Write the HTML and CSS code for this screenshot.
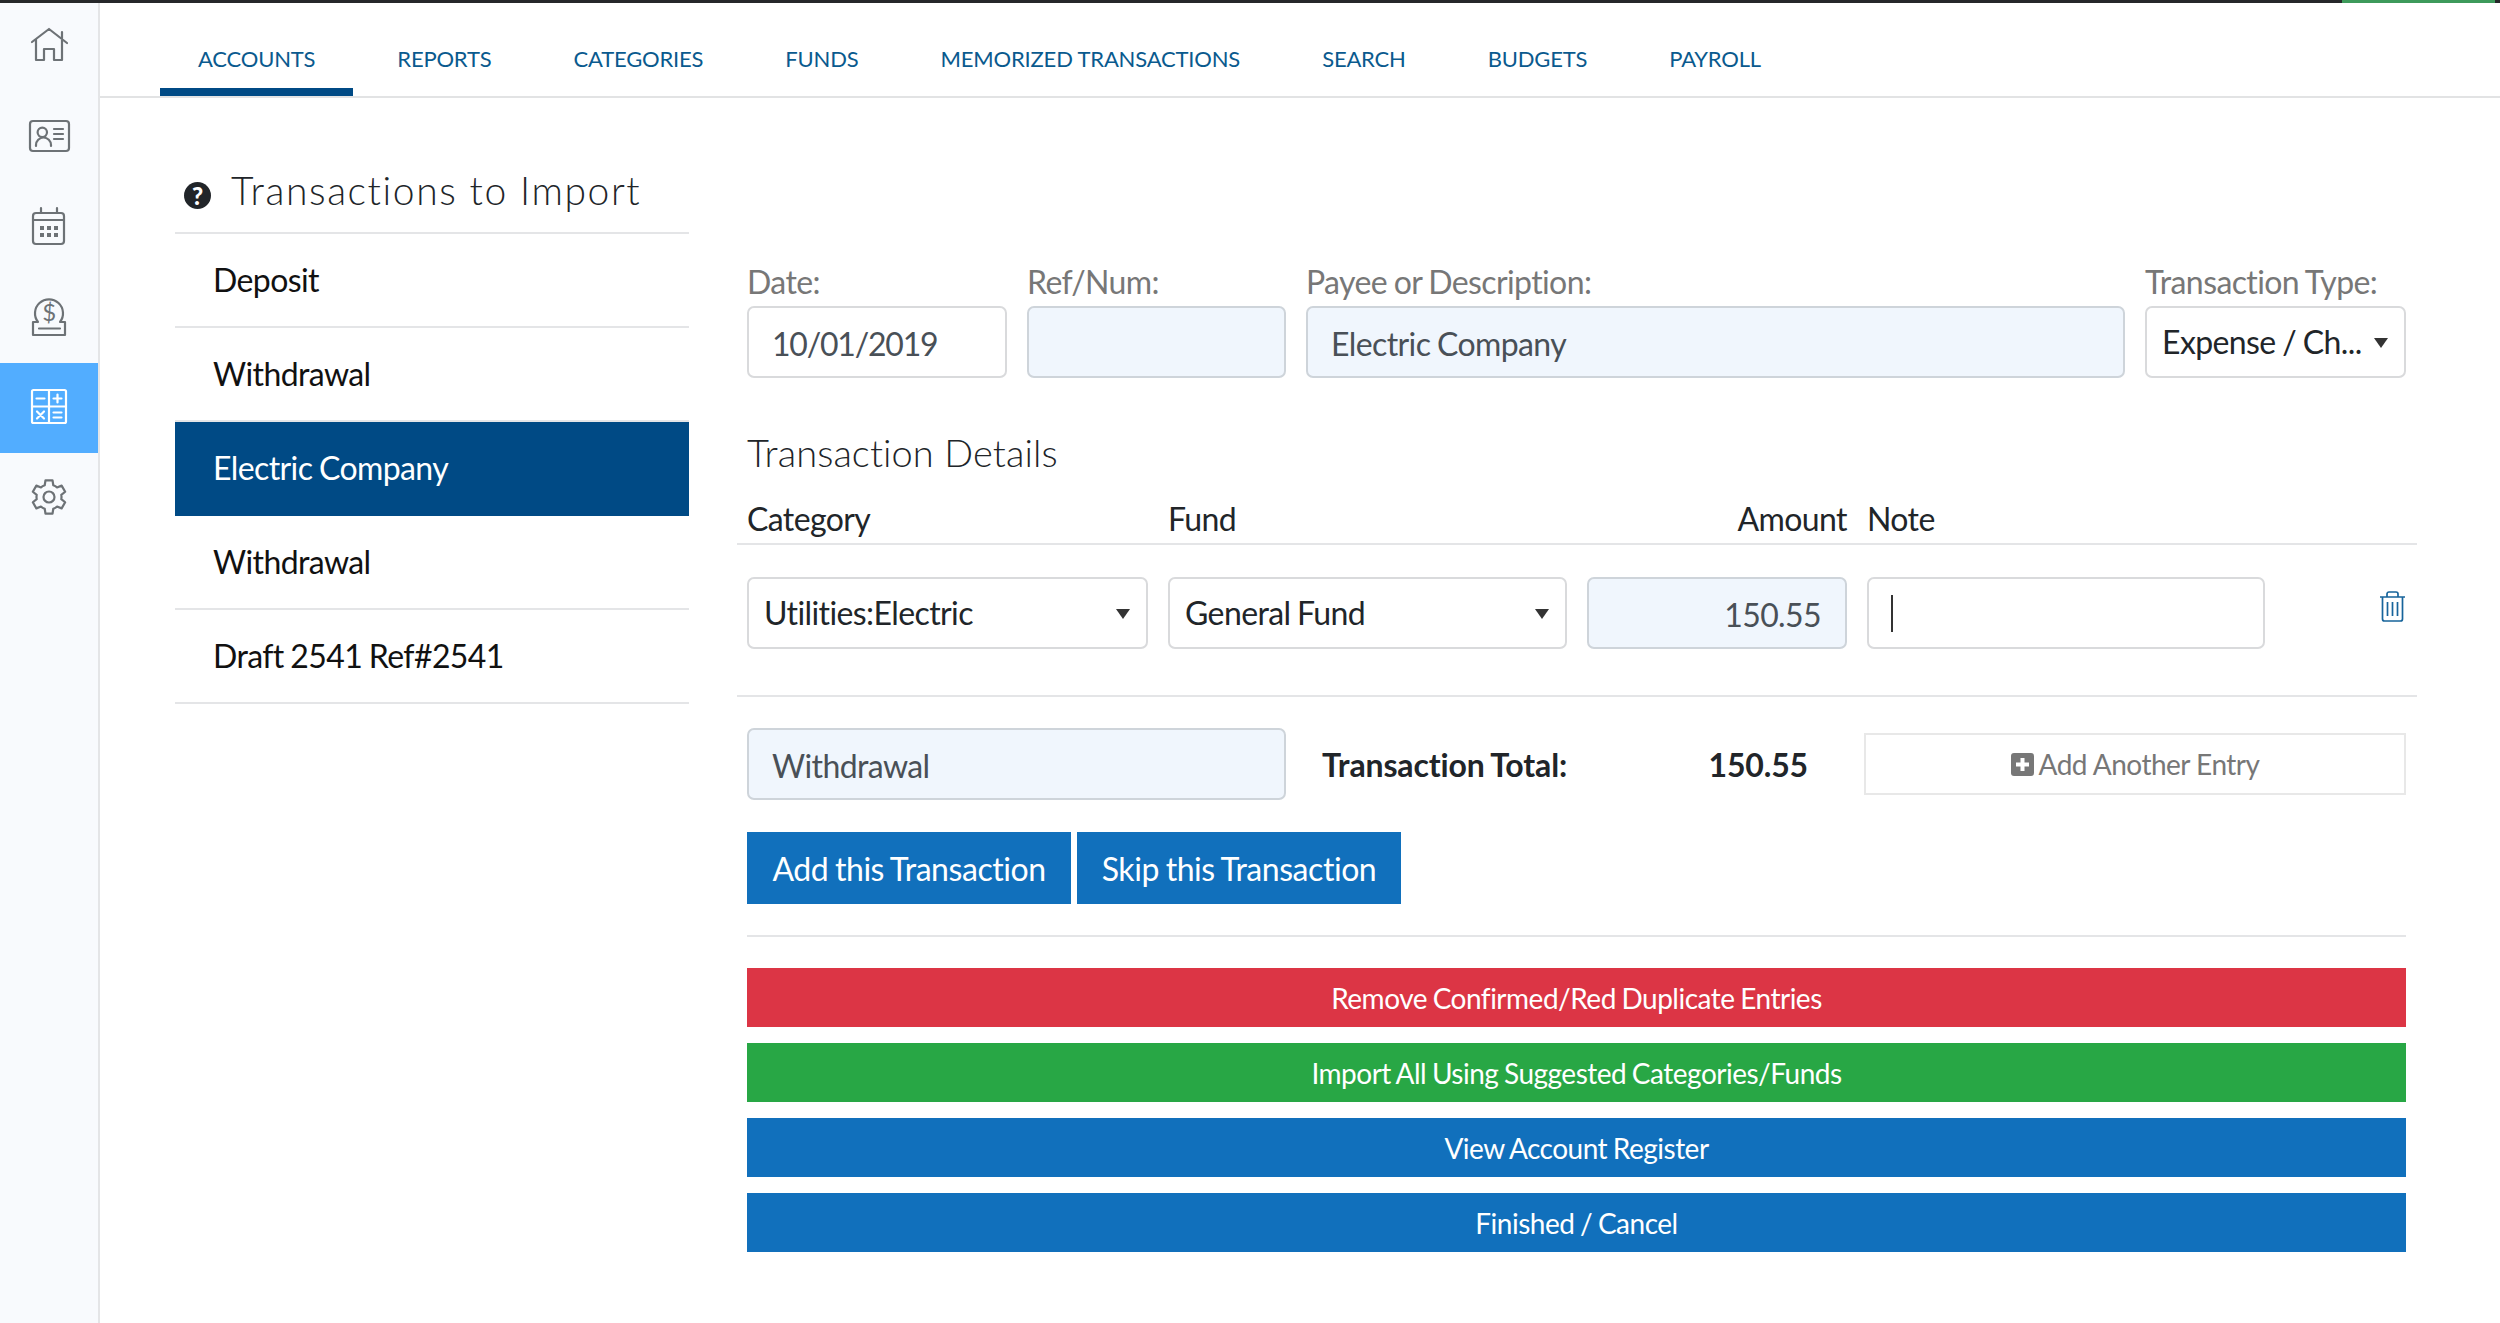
FILE: index.html
```html
<!DOCTYPE html>
<html lang="en">
<head>
  <meta charset="UTF-8">
  <title>Transactions to Import</title>
  <link rel="stylesheet" href="styles.css">
</head>
<body>
  <div class="progress"><div class="progress-fill"></div></div>
  <div class="app">
    <!-- Left icon rail -->
    <nav class="rail">
      <a class="rail-item home">
        <svg viewBox="0 0 44 44" width="44" height="44"><path d="M4 19 21 6l18 14M34 9v8M8 16v21h8V26h10v11h8V16"/></svg>
      </a>
      <a class="rail-item up">
        <svg viewBox="0 0 44 44" width="44" height="44"><rect x="2" y="7" width="39" height="30" rx="3"/><circle cx="14.3" cy="18.3" r="4.7"/><path d="M8 32v-1a7.5 7.5 0 0 1 15 0v1M26 15h9M26 20h9M26 25h9"/></svg>
      </a>
      <a class="rail-item up">
        <svg viewBox="0 0 44 44" width="44" height="44"><rect x="5" y="9" width="31" height="31" rx="3"/><path d="M13 4v5M29 4v5M5 16h31"/><g class="fill"><rect x="12" y="22" width="4" height="4"/><rect x="19" y="22" width="4" height="4"/><rect x="26" y="22" width="4" height="4"/><rect x="12" y="29" width="4" height="4"/><rect x="19" y="29" width="4" height="4"/><rect x="26" y="29" width="4" height="4"/></g></svg>
      </a>
      <a class="rail-item">
        <svg viewBox="0 0 44 44" width="44" height="44"><path d="M10 27A14 14 0 1 1 32 27H37V40H5V27H10M11 33.5H32"/><text x="21" y="26" class="dollar">$</text></svg>
      </a>
      <a class="rail-item active">
        <svg viewBox="0 0 44 44" width="44" height="44"><rect x="4" y="5" width="34" height="33" rx="1.5"/><path d="M21 5v33M4 21.5h34M8.500 13.5h8M25.500 13.5h8M29.500 9.500v8M9 26.500l7 7M16 26.500l-7 7M25.500 27.500h8M25.500 32.500h8"/></svg>
      </a>
      <a class="rail-item">
        <svg viewBox="0 0 44 44" width="44" height="44"><g transform="translate(21 22)"><circle r="5.500"/><path d="M-3.530-16.630H3.530L4.280-11.750A12.500 12.500 0 0 1 8.030-9.580L12.630-11.380 16.170-5.250 12.310-2.170A12.500 12.500 0 0 1 12.310 2.170L16.170 5.250 12.630 11.380 8.030 9.580A12.500 12.500 0 0 1 4.280 11.750L3.530 16.630H-3.530L-4.280 11.750A12.500 12.500 0 0 1-8.030 9.580L-12.630 11.380-16.170 5.250-12.310 2.170A12.500 12.500 0 0 1-12.310-2.170L-16.170-5.250-12.630-11.380-8.030-9.580A12.500 12.500 0 0 1-4.280-11.750Z"/></g></svg>
      </a>
    </nav>

    <div class="main">
      <ul class="tabs">
        <li class="tab active">Accounts</li>
        <li class="tab">Reports</li>
        <li class="tab">Categories</li>
        <li class="tab">Funds</li>
        <li class="tab">Memorized Transactions</li>
        <li class="tab">Search</li>
        <li class="tab">Budgets</li>
        <li class="tab">Payroll</li>
      </ul>

      <div class="content">
        <!-- Imported transaction list -->
        <section class="import-list">
          <h2 class="list-title"><span class="help">?</span>Transactions to Import</h2>
          <div class="list-row">Deposit</div>
          <div class="list-row">Withdrawal</div>
          <div class="list-row selected">Electric Company</div>
          <div class="list-row">Withdrawal</div>
          <div class="list-row">Draft 2541 Ref#2541</div>
        </section>

        <!-- Transaction form -->
        <section class="form">
          <div class="top-fields">
            <div>
              <label class="field-label">Date:</label>
              <input class="input date" type="text" value="10/01/2019">
            </div>
            <div>
              <label class="field-label">Ref/Num:</label>
              <input class="input tinted" type="text">
            </div>
            <div>
              <label class="field-label">Payee or Description:</label>
              <input class="input tinted" type="text" value="Electric Company">
            </div>
            <div>
              <label class="field-label">Transaction Type:</label>
              <div class="select">Expense / Ch...</div>
            </div>
          </div>

          <h3 class="details-title">Transaction Details</h3>

          <div class="details">
            <div class="details-head">
              <span>Category</span>
              <span>Fund</span>
              <span class="right">Amount</span>
              <span>Note</span>
            </div>
            <div class="details-row">
              <div class="select">Utilities:Electric</div>
              <div class="select">General Fund</div>
              <input class="input tinted amount" type="text" value="150.55">
              <div class="input note"><span class="caret"></span></div>
              <svg class="trash" viewBox="0 0 27 31" width="27" height="31"><path d="M1 6h25M8 6V3a2 2 0 0 1 2-2h7a2 2 0 0 1 2 2v3M3.500 6v22a2 2 0 0 0 2 2h16a2 2 0 0 0 2-2V6M8.500 11v14M13.500 11v14M18.500 11v14"/></svg>
            </div>
          </div>

          <div class="total-row">
            <input class="input tinted memo" type="text" value="Withdrawal">
            <div class="total"><span>Transaction Total:</span><span>150.55</span></div>
            <button class="add-entry">
              <svg viewBox="0 0 23 23" width="23" height="23"><rect width="23" height="23" rx="3"/><path d="M11.500 5v13M5 11.500h13"/></svg>
              Add Another Entry
            </button>
          </div>

          <div class="actions">
            <button class="btn blue">Add this Transaction</button>
            <button class="btn blue">Skip this Transaction</button>
          </div>

          <hr class="rule">

          <div class="wide-actions">
            <button class="wide red">Remove Confirmed/Red Duplicate Entries</button>
            <button class="wide green">Import All Using Suggested Categories/Funds</button>
            <button class="wide blue">View Account Register</button>
            <button class="wide blue">Finished / Cancel</button>
          </div>
        </section>
      </div>
    </div>
  </div>
</body>
</html>
```

FILE: styles.css
```css
* {
  box-sizing: border-box;
}
html, body {
  height: 100%;
}
body {
  margin: 0;
  font-family: Lato, "Open Sans", sans-serif;
  font-size: 32px;
  letter-spacing: -0.6px;
  word-spacing: -1px;
  color: #212529;
  background: #fff;
  overflow: hidden;
}

/* Top strip */
.progress {
  height: 3px;
  background: #26282a;
  padding-left: 2342px;
}
.progress-fill {
  width: 153px;
  height: 3px;
  background: #3d9a5b;
}
.app {
  display: flex;
  height: 1320px;
}

/* Icon rail */
.rail {
  width: 100px;
  flex-shrink: 0;
  background: #f8fafd;
  border-right: 2px solid #e4e5e7;
}
.rail-item {
  display: flex;
  align-items: center;
  justify-content: center;
  height: 90px;
  padding-left: 1px;
  padding-bottom: 2px;
}
.rail-item.home {
  padding-bottom: 6px;
}
.rail-item.up {
  padding-bottom: 4px;
}
.rail svg {
  fill: none;
  stroke: #6d7276;
  stroke-width: 2.2;
  stroke-linejoin: round;
  stroke-linecap: round;
}
.rail svg .fill {
  fill: #6d7276;
  stroke: none;
}
.rail svg .dollar {
  fill: #6d7276;
  stroke: none;
  font-size: 24px;
  text-anchor: middle;
}
.rail-item.active {
  background: #52adff;
}
.rail-item.active svg {
  stroke: #fff;
}

/* Tabs */
.main {
  flex: 1;
  min-width: 0;
}
.tabs {
  display: flex;
  gap: 6px;
  height: 95px;
  margin: 0;
  padding: 0 0 0 60px;
  list-style: none;
  border-bottom: 2px solid #e2e3e4;
}
.tab {
  height: 93px;
  padding: 41px 38px 0;
  border-bottom: 8px solid transparent;
  font-size: 22px;
  line-height: 30px;
  letter-spacing: -0.18px;
  word-spacing: 0;
  text-transform: uppercase;
  color: #0a5a8e;
  white-space: nowrap;
}
.tab.active {
  border-bottom-color: #004a85;
}

.content {
  display: flex;
  padding-left: 75px;
}

/* Left list */
.import-list {
  width: 514px;
  margin-right: 58px;
  padding-top: 62px;
}
.list-title {
  display: flex;
  align-items: center;
  height: 74px;
  margin: 0;
  padding: 0 0 12px 9px;
  border-bottom: 2px solid #e4e5e7;
  font-size: 39px;
  font-weight: 300;
  letter-spacing: 1.6px;
  word-spacing: 0;
  color: #212529;
}
.help {
  width: 27px;
  height: 27px;
  margin: 10px 20px 0 0;
  border-radius: 50%;
  background: #212529;
  color: #fff;
  font-size: 24px;
  font-weight: 900;
  line-height: 27px;
  letter-spacing: 0;
  text-align: center;
}
.list-row {
  height: 94px;
  padding: 0 38px;
  border-bottom: 2px solid #e4e5e7;
  line-height: 92px;
  color: #111;
}
.list-row.selected {
  background: #004a85;
  border-bottom-color: #004a85;
  color: #fff;
}

/* Form */
.form {
  width: 1659px;
  padding-top: 166px;
}
.top-fields {
  display: grid;
  grid-template-columns: 260px 259px 819px 261px;
  column-gap: 20px;
}
.field-label {
  display: block;
  height: 42px;
  line-height: 36px;
  color: #777;
}
.input {
  display: block;
  width: 100%;
  height: 72px;
  padding: 2px 24px 0 23px;
  border: 2px solid #d9dadc;
  border-radius: 7px;
  background: #fff;
  outline: none;
  font-family: inherit;
  font-size: 32px;
  letter-spacing: inherit;
  word-spacing: inherit;
  color: #495057;
}
.input.tinted {
  background: #f0f6fd;
  border-color: #ced4da;
}
.input.date {
  letter-spacing: -1.2px;
}
.select {
  position: relative;
  height: 72px;
  padding-left: 15px;
  border: 2px solid #d9dadc;
  border-radius: 7px;
  background: #fff;
  line-height: 68px;
  white-space: nowrap;
}
.select::after {
  content: "";
  position: absolute;
  top: 30px;
  right: 16px;
  border-top: 10px solid #333;
  border-left: 7px solid transparent;
  border-right: 7px solid transparent;
}
.details-title {
  height: 50px;
  margin: 52px 0 0;
  font-size: 38px;
  font-weight: 300;
  line-height: 45px;
  letter-spacing: 0.1px;
  word-spacing: 0;
  color: #212529;
}

/* Split table */
.details {
  margin: 20px -11px 0 -10px;
  padding: 0 11px 0 10px;
}
.details-head, .details-row {
  display: grid;
  grid-template-columns: 401px 399px 260px 398px 1fr;
  column-gap: 20px;
}
.details-head {
  height: 45px;
  margin: 0 -11px 0 -10px;
  padding: 0 11px 0 10px;
  border-bottom: 2px solid #e4e5e7;
  line-height: 38px;
}
.details-head .right {
  text-align: right;
}
.details-row {
  height: 152px;
  margin: 0 -11px 0 -10px;
  padding: 32px 11px 0 10px;
  border-bottom: 2px solid #e4e5e7;
}
.amount {
  text-align: right;
}
.note {
  padding: 0 15px;
  display: flex;
  align-items: center;
}
.caret {
  width: 2px;
  height: 37px;
  margin-left: 7px;
  background: #333;
}
.trash {
  justify-self: end;
  margin-top: 14px;
  fill: none;
  stroke: #17649b;
  stroke-width: 1.7;
}

/* Total row */
.total-row {
  display: flex;
  align-items: center;
  margin-top: 31px;
  margin-right: -2px;
}
.memo {
  width: 539px;
  height: 72px;
}
.total {
  display: flex;
  justify-content: space-between;
  width: 486px;
  margin-left: 36px;
  font-weight: 700;
  letter-spacing: -0.15px;
  color: #212529;
}
.add-entry {
  display: flex;
  align-items: center;
  justify-content: center;
  gap: 5px;
  width: 542px;
  height: 62px;
  margin-left: 56px;
  border: 2px solid #e8e8e8;
  background: #fff;
  font-family: inherit;
  font-size: 28px;
  letter-spacing: -0.5px;
  color: #777;
}
.add-entry rect {
  fill: #777;
}
.add-entry path {
  stroke: #fff;
  stroke-width: 4;
}

/* Buttons */
.actions {
  display: flex;
  gap: 6px;
  margin-top: 32px;
}
.btn {
  width: 324px;
  height: 72px;
  border: 0;
  font-family: inherit;
  font-size: 32px;
  letter-spacing: -0.45px;
  word-spacing: -1px;
  color: #fff;
}
.rule {
  height: 2px;
  margin: 31px 0;
  border: 0;
  background: #e4e5e7;
}
.wide-actions {
  display: flex;
  flex-direction: column;
  gap: 16px;
}
.wide {
  height: 59px;
  border: 0;
  font-family: inherit;
  font-size: 28px;
  letter-spacing: -0.5px;
  word-spacing: -1px;
  color: #fff;
}
.blue {
  background: #1170bc;
}
.red {
  background: #dc3545;
}
.green {
  background: #28a745;
}
```
